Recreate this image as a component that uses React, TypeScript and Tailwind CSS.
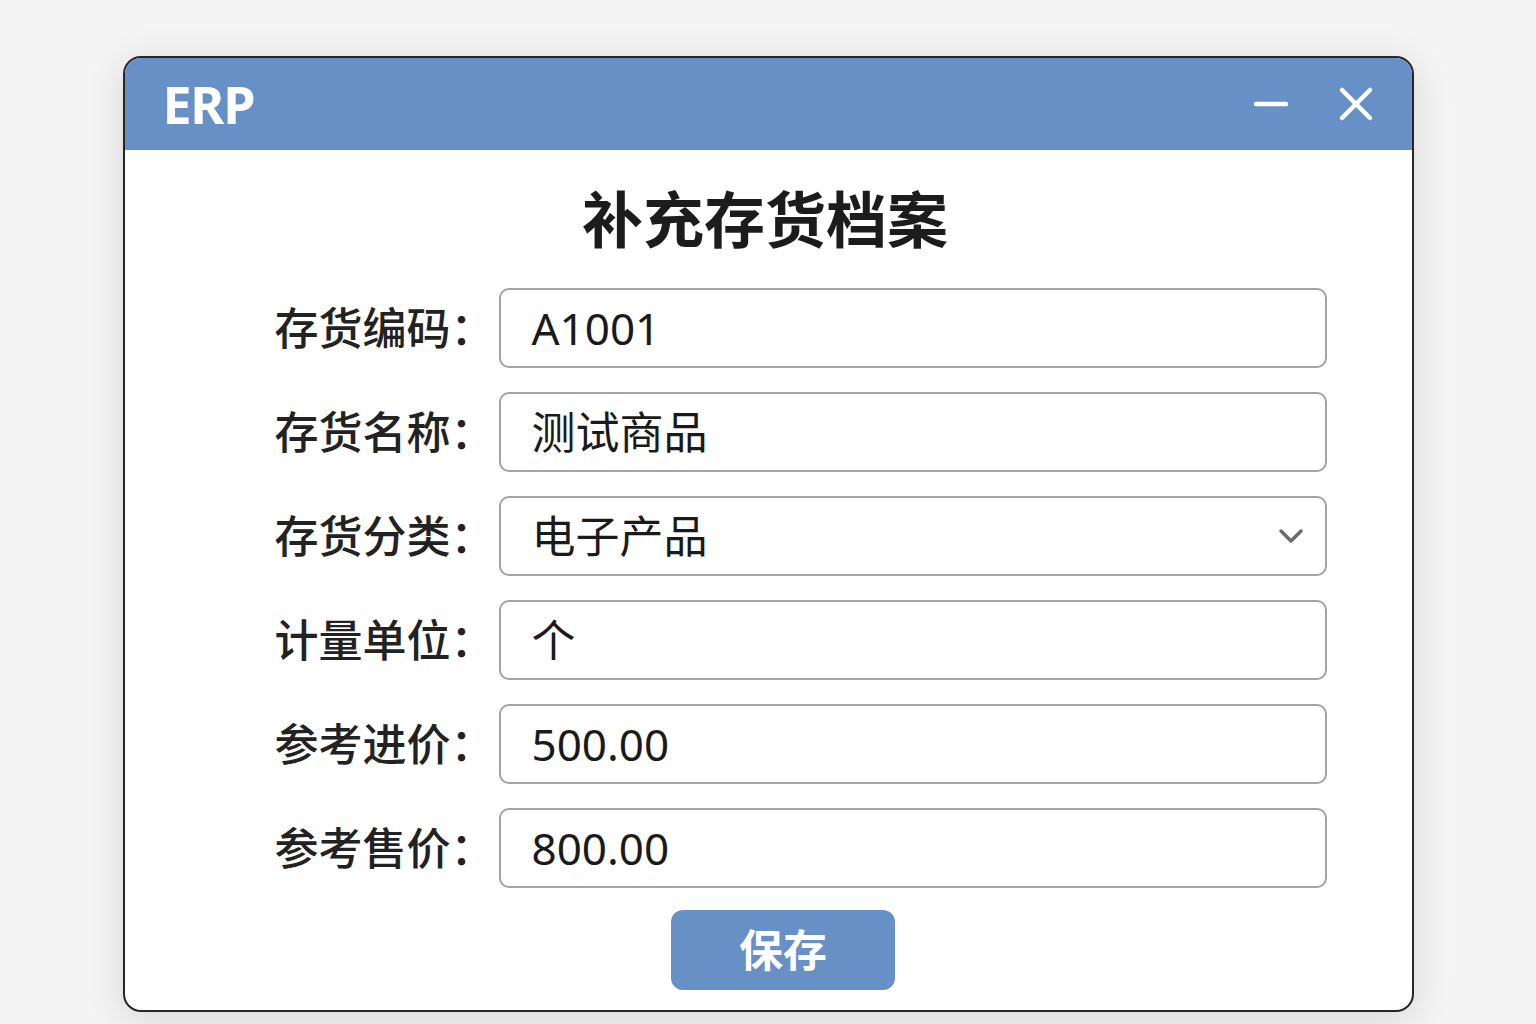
const fields = [
  { label: "存货编码：", value: "A1001" },
  { label: "存货名称：", value: "测试商品" },
  { label: "存货分类：", value: "电子产品", select: true },
  { label: "计量单位：", value: "个" },
  { label: "参考进价：", value: "500.00" },
  { label: "参考售价：", value: "800.00" },
];

export default function App() {
  return (
    <div
      className="min-h-[1024px] w-full bg-[#f4f4f4] pt-[56px]"
      style={{ fontFamily: '"Noto Sans", "Noto Sans CJK SC", sans-serif' }}
    >
      <div className="mx-auto flex h-[956px] w-[1291px] flex-col overflow-hidden rounded-[18px] border-2 border-[#262626] bg-white shadow-[0_8px_40px_rgba(0,0,0,0.12)]">
        {/* Title bar */}
        <div className="flex h-[92px] shrink-0 items-center justify-between bg-[#6690c6] pl-[38px] pr-[38px]">
          <span className="text-[52px] font-bold leading-none tracking-tight text-white">ERP</span>
          <div className="flex items-center gap-[50px]">
            <svg width="36" height="36" viewBox="0 0 36 36">
              <line x1="4" y1="18" x2="34" y2="18" stroke="white" strokeWidth="4.5" strokeLinecap="round" />
            </svg>
            <svg width="36" height="36" viewBox="0 0 36 36">
              <line x1="4" y1="4" x2="32" y2="32" stroke="white" strokeWidth="4.5" strokeLinecap="round" />
              <line x1="32" y1="4" x2="4" y2="32" stroke="white" strokeWidth="4.5" strokeLinecap="round" />
            </svg>
          </div>
        </div>

        {/* Body */}
        <div className="flex flex-1 flex-col pt-[40px]">
          <h1 className="pr-[6px] text-center text-[61px] font-bold leading-[60px] text-[#1c1c1c]">补充存货档案</h1>

          <div className="mt-[38px] flex flex-col gap-[24px] pl-[150px]">
            {fields.map((f) => (
              <div key={f.label} className="flex items-center">
                <div className="w-[222px] whitespace-nowrap text-[44px] font-medium leading-none text-[#222]">{f.label}</div>
                <div className="ml-[2px] flex h-[80px] w-[828px] items-center justify-between rounded-[10px] border-2 border-[#a3a3a3] pl-[31px] pr-[20px]">
                  <span className="text-[44px] leading-none text-[#1a1a1a]">{f.value}</span>
                  {f.select && (
                    <svg width="28" height="18" viewBox="0 0 28 18">
                      <polyline points="4,4 14,14 24,4" fill="none" stroke="#6b6b6b" strokeWidth="3.5" strokeLinecap="round" strokeLinejoin="round" />
                    </svg>
                  )}
                </div>
              </div>
            ))}
          </div>

          <div className="mt-[22px] flex justify-center pl-[30px]">
            <button className="flex h-[80px] w-[224px] items-center justify-center rounded-[12px] bg-[#6690c6] text-[44px] font-bold leading-none text-white">
              保存
            </button>
          </div>
        </div>
      </div>
    </div>
  );
}
